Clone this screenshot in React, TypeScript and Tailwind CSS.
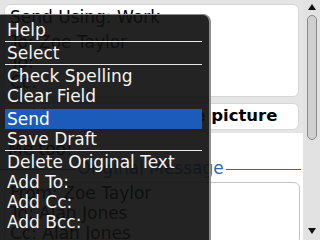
type MenuItem = {
  label: string;
  sepAfter?: boolean;
  active?: boolean;
  gapBefore?: boolean;
};

const menuItems: MenuItem[] = [
  { label: "Help", sepAfter: true },
  { label: "Select", sepAfter: true },
  { label: "Check Spelling" },
  { label: "Clear Field" },
  { label: "Send", active: true, gapBefore: true },
  { label: "Save Draft", sepAfter: true },
  { label: "Delete Original Text" },
  { label: "Add To:" },
  { label: "Add Cc:" },
  { label: "Add Bcc:" },
];

function Line({ children }: { children: React.ReactNode }) {
  return <div className="h-[20px] leading-[20px] whitespace-nowrap">{children}</div>;
}

function ScrollBar() {
  return (
    <div className="w-[17px] bg-[#e2e2e2] flex flex-col items-center pt-[4px] pb-[6px]">
      <svg width="8" height="6" viewBox="0 0 8 6">
        <path d="M4 0 L8 6 L0 6 Z" fill="#111" />
      </svg>
      <div className="mt-[5px] w-[10px] h-[125px] rounded-full border border-[#8a8a8a] bg-[#cfcfcf]" />
      <div className="flex-1" />
      <svg width="8" height="6" viewBox="0 0 8 6">
        <path d="M0 0 L8 0 L4 6 Z" fill="#111" />
      </svg>
    </div>
  );
}

export default function App() {
  return (
    <div className="relative w-[320px] h-[240px] overflow-hidden bg-white flex font-['DejaVu_Sans',sans-serif] text-black">
      {/* compose screen */}
      <div className="w-[303px] flex flex-col">
        <div className="bg-[#e5e5e5] pt-[4px] px-[4px] pb-[3px] flex flex-col gap-[6px]">
          <div className="h-[93px] bg-white rounded-[6px] border border-[#d6d6d6] pl-[5px] pt-[2px] text-[17px]">
            <Line>Send Using: Work</Line>
            <div className="mt-[5px]">
              <Line>To: Zoe Taylor</Line>
              <Line>To:</Line>
              <Line>Cc:</Line>
            </div>
          </div>
          <div className="h-[27px] bg-white rounded-[6px] border border-[#d6d6d6] pl-[5px] flex items-center whitespace-nowrap overflow-hidden">
            <span className="w-[125px] shrink-0 text-[17px]">Subject:</span>
            <span className="text-[16.5px] font-bold">Re: The picture</span>
          </div>
        </div>

        <div className="pt-[6px] pl-[8px] text-[17px]">
          <Line>Me too!</Line>
        </div>

        <div className="h-[20px] flex items-center pr-[2px]">
          <div className="flex-1 h-px bg-[#3567ae]" />
          <span className="px-[2px] text-[17px] text-[#2f66b3] whitespace-nowrap">Original Message</span>
          <div className="flex-1 h-px bg-[#3567ae]" />
        </div>

        <div className="mt-[3px] ml-[4px] mr-[3px] h-[80px] rounded-[6px] border border-[#c4c4c4] pl-[5px] text-[17px]">
          <Line>From: Zoe Taylor</Line>
          <Line>To: Alan Jones</Line>
          <Line>Cc: Alan Jones</Line>
        </div>
      </div>

      <ScrollBar />

      {/* context menu overlay */}
      <div className="absolute left-0 top-[14px] w-[211px] h-[240px] bg-[rgba(16,16,16,0.92)] border-t border-r-2 border-[#8c8c8c] rounded-tr-[8px] pt-[5px] text-[17px] text-[#f4f4f4]">
        {menuItems.map((item) => (
          <div key={item.label}>
            <div
              className={`mx-[5px] w-[197px] h-[20px] leading-[20px] pl-[2px] whitespace-nowrap ${
                item.active ? "bg-[#1c5bb9] text-white" : ""
              } ${item.gapBefore ? "mt-[3px]" : ""}`}
            >
              {item.label}
            </div>
            {item.sepAfter && <div className="mx-[5px] w-[197px] h-px bg-[#e8e8e8] my-[1px]" />}
          </div>
        ))}
      </div>
    </div>
  );
}
